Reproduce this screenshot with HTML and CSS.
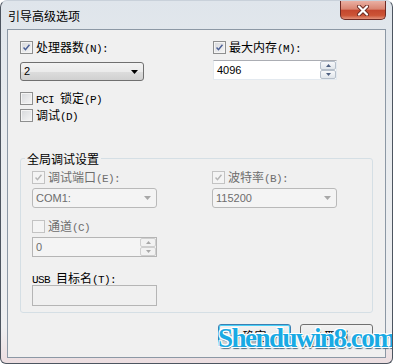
FILE: index.html
```html
<!DOCTYPE html>
<html lang="zh-CN">
<head>
  <meta charset="UTF-8">
  <title>引导高级选项</title>
  <link rel="stylesheet" href="styles.css">
</head>
<body>
  <div class="window">
    <div class="titlebar">
      <span class="title">引导高级选项</span>
      <span class="close">
        <svg width="14" height="11" viewBox="0 0 14 11">
          <path d="M3 1.5 L11 9.5 M11 1.5 L3 9.5" stroke="#6a2a22" stroke-width="4" stroke-linecap="round"/>
          <path d="M3 1.5 L11 9.5 M11 1.5 L3 9.5" stroke="#fff" stroke-width="2.2" stroke-linecap="round"/>
        </svg>
      </span>
    </div>

    <div class="client">
      <div class="opts">
        <div class="col">
          <label class="check">
            <span class="cb"><svg viewBox="0 0 13 13"><path d="M3 6.5 L5.3 9 L10 3.2" /></svg></span>
            <span>处理器数<span class="en">(N):</span></span>
          </label>
          <div class="combo">
            <span class="val">2</span>
            <svg class="arrow" width="7" height="4" viewBox="0 0 7 4"><path d="M0 0 H7 L3.5 4 Z"/></svg>
          </div>
          <label class="check pci">
            <span class="cb"></span>
            <span><span class="en">PCI </span>锁定<span class="en">(P)</span></span>
          </label>
          <label class="check dbg">
            <span class="cb"></span>
            <span>调试<span class="en">(D)</span></span>
          </label>
        </div>
        <div class="col">
          <label class="check">
            <span class="cb"><svg viewBox="0 0 13 13"><path d="M3 6.5 L5.3 9 L10 3.2" /></svg></span>
            <span>最大内存<span class="en">(M):</span></span>
          </label>
          <div class="spin mem">
            <span class="val">4096</span>
            <span class="spin-btns">
              <span class="sb"><svg width="5" height="3" viewBox="0 0 5 3"><path d="M0 3 H5 L2.5 0 Z"/></svg></span>
              <span class="sb"><svg width="5" height="3" viewBox="0 0 5 3"><path d="M0 0 H5 L2.5 3 Z"/></svg></span>
            </span>
          </div>
        </div>
      </div>

      <fieldset class="group">
        <legend>全局调试设置</legend>
        <div class="group-grid">
          <div class="col">
            <label class="check off">
              <span class="cb"><svg viewBox="0 0 13 13"><path d="M3 6.5 L5.3 9 L10 3.2" /></svg></span>
              <span>调试端口<span class="en">(E):</span></span>
            </label>
            <div class="combo off">
              <span class="val">COM1:</span>
              <svg class="arrow" width="7" height="4" viewBox="0 0 7 4"><path d="M0 0 H7 L3.5 4 Z"/></svg>
            </div>
            <label class="check off chan">
              <span class="cb"></span>
              <span>通道<span class="en">(C)</span></span>
            </label>
            <div class="spin off">
              <span class="val">0</span>
              <span class="spin-btns">
                <span class="sb"><svg width="5" height="3" viewBox="0 0 5 3"><path d="M0 3 H5 L2.5 0 Z"/></svg></span>
                <span class="sb"><svg width="5" height="3" viewBox="0 0 5 3"><path d="M0 0 H5 L2.5 3 Z"/></svg></span>
              </span>
            </div>
            <div class="usb-label"><span class="en">USB </span>目标名<span class="en">(T):</span></div>
            <div class="textbox off"></div>
          </div>
          <div class="col">
            <label class="check off">
              <span class="cb"><svg viewBox="0 0 13 13"><path d="M3 6.5 L5.3 9 L10 3.2" /></svg></span>
              <span>波特率<span class="en">(B):</span></span>
            </label>
            <div class="combo off">
              <span class="val">115200</span>
              <svg class="arrow" width="7" height="4" viewBox="0 0 7 4"><path d="M0 0 H7 L3.5 4 Z"/></svg>
            </div>
          </div>
        </div>
      </fieldset>

      <div class="buttons">
        <button class="btn default">确定</button>
        <button class="btn">取消</button>
      </div>
    </div>

    <div class="watermark">Shenduwin8.com</div>
  </div>
</body>
</html>
```

FILE: styles.css
```css
body {
  margin: 0;
  font-family: "Noto Sans CJK SC", sans-serif;
  font-size: 12px;
  color: #000;
}
.window {
  position: relative;
  width: 393px;
  height: 364px;
  box-sizing: border-box;
  border: 1px solid #4d5560;
  border-top-color: #c9d1da;
  border-radius: 7px 7px 6px 6px;
  background: linear-gradient(#dfe5eb, #e9ecef 35%, #eeeff1 90%, #ecdde0);
  padding: 0 6px 5px 6px;
  display: flex;
  flex-direction: column;
  overflow: hidden;
}
.titlebar {
  height: 28px;
  display: flex;
  justify-content: space-between;
  align-items: flex-start;
}
.title {
  padding: 9px 0 0 1px;
  line-height: 12px;
}
.close {
  width: 46px;
  height: 19px;
  box-sizing: border-box;
  border: 1px solid #6d2a24;
  border-top: none;
  border-radius: 0 0 5px 5px;
  background: linear-gradient(#eab0a3, #d98471 45%, #c4472e 52%, #cc5436 80%, #e2917a);
  display: flex;
  align-items: center;
  justify-content: center;
}
.client {
  flex: 1;
  border: 1px solid #8c98a5;
  background: #f0f0f0;
  padding: 11px 12px 0 12px;
}
.en {
  font-family: "Liberation Mono", monospace;
  font-size: 11px;
  letter-spacing: -0.6px;
}
.opts {
  display: grid;
  grid-template-columns: 193px 124px;
}
.col {
  display: flex;
  flex-direction: column;
  align-items: flex-start;
}
.check {
  display: flex;
  align-items: center;
  gap: 3px;
  height: 13px;
  line-height: 13px;
  white-space: nowrap;
}
.cb {
  width: 13px;
  height: 13px;
  box-sizing: border-box;
  border: 1px solid #8e8f8f;
  background: linear-gradient(135deg, #d6d8db, #f6f6f6);
  box-shadow: inset 0 0 0 1px #f4f4f4;
  display: flex;
}
.cb svg {
  width: 11px;
  height: 11px;
}
.cb path {
  fill: none;
  stroke: #4a5f96;
  stroke-width: 1.7;
}
.check.off {
  color: #6d6d6d;
}
.check.off .cb {
  border-color: #c3c3c3;
  background: #f4f4f4;
  box-shadow: none;
}
.check.off .cb path {
  stroke: #b5b5b5;
}
.val {
  font-family: "Liberation Sans", sans-serif;
  font-size: 11px;
  line-height: 17px;
  padding-left: 3px;
}
.combo {
  width: 124px;
  height: 19px;
  box-sizing: border-box;
  margin-top: 8px;
  border: 1px solid #707070;
  border-radius: 3px;
  background: linear-gradient(#f3f3f3, #ebebeb 50%, #dddddd 51%, #d0d0d0);
  display: flex;
  align-items: center;
  justify-content: space-between;
  padding-right: 5px;
}
.combo .arrow path {
  fill: #000;
}
.combo.off {
  width: 125px;
  height: 20px;
  margin-top: 4px;
  border-color: #b9b9b9;
  background: #f4f4f4;
  color: #6d6d6d;
}
.combo.off .arrow path {
  fill: #a8a8a8;
}
.pci {
  margin-top: 11px;
}
.dbg {
  margin-top: 4px;
}
.spin {
  width: 124px;
  height: 20px;
  box-sizing: border-box;
  border: 1px solid #e3e9ef;
  border-top-color: #abadb3;
  background: #fff;
  display: flex;
  justify-content: space-between;
  align-items: center;
}
.spin.mem {
  margin-top: 6px;
}
.spin-btns {
  width: 16px;
  height: 18px;
  display: flex;
  flex-direction: column;
}
.sb {
  flex: 1;
  box-sizing: border-box;
  border: 1px solid #b6bfca;
  border-radius: 2px;
  background: linear-gradient(#f7f8fa, #e1e6eb);
  display: flex;
  align-items: center;
  justify-content: center;
}
.sb path {
  fill: #4d5f80;
}
.spin.off {
  width: 125px;
  margin-top: 4px;
  border-color: #b5b5b5;
  background: #f4f4f4;
  color: #6d6d6d;
}
.spin.off .sb {
  border-color: #cfcfcf;
  background: #f2f2f2;
}
.spin.off .sb path {
  fill: #a8a8a8;
}
.chan {
  margin-top: 12px;
}
.group {
  margin: 30px 0 0 0;
  padding: 6px 11px 6px 11px;
  border: 1px solid #d5dfe5;
  border-radius: 3px;
  min-width: 0;
}
.group legend {
  padding: 0 2px;
  margin-left: -7px;
  line-height: 13px;
}
.group-grid {
  display: grid;
  grid-template-columns: 180px 125px;
}
.usb-label {
  margin-top: 15px;
  line-height: 12px;
  height: 12px;
}
.textbox {
  width: 125px;
  height: 21px;
  box-sizing: border-box;
  margin-top: 1px;
  border: 1px solid #b5b5b5;
  background: #f0f0f0;
}
.buttons {
  display: flex;
  justify-content: flex-end;
  gap: 9px;
  margin-top: 11px;
}
.btn {
  width: 73px;
  height: 23px;
  font-family: "Noto Sans CJK SC", sans-serif;
  font-size: 12px;
  line-height: 12px;
  padding: 0;
  border: 1px solid #707070;
  border-radius: 3px;
  background: linear-gradient(#f2f2f2, #ebebeb 50%, #dddddd 51%, #cfcfcf);
}
.btn.default {
  border-color: #3c7fb1;
  box-shadow: inset 0 0 0 1px #48d0f8;
}
.watermark {
  position: absolute;
  left: 217px;
  top: 322px;
  font-family: "Liberation Serif", serif;
  font-weight: bold;
  font-size: 27px;
  letter-spacing: -1.5px;
  color: #19aae4;
  text-shadow: 1px 1px 0 #fff, -1px -1px 0 #fff, 1px -1px 0 #fff, -1px 1px 0 #fff, 1px 2px 1px #4a6a80;
}
```
